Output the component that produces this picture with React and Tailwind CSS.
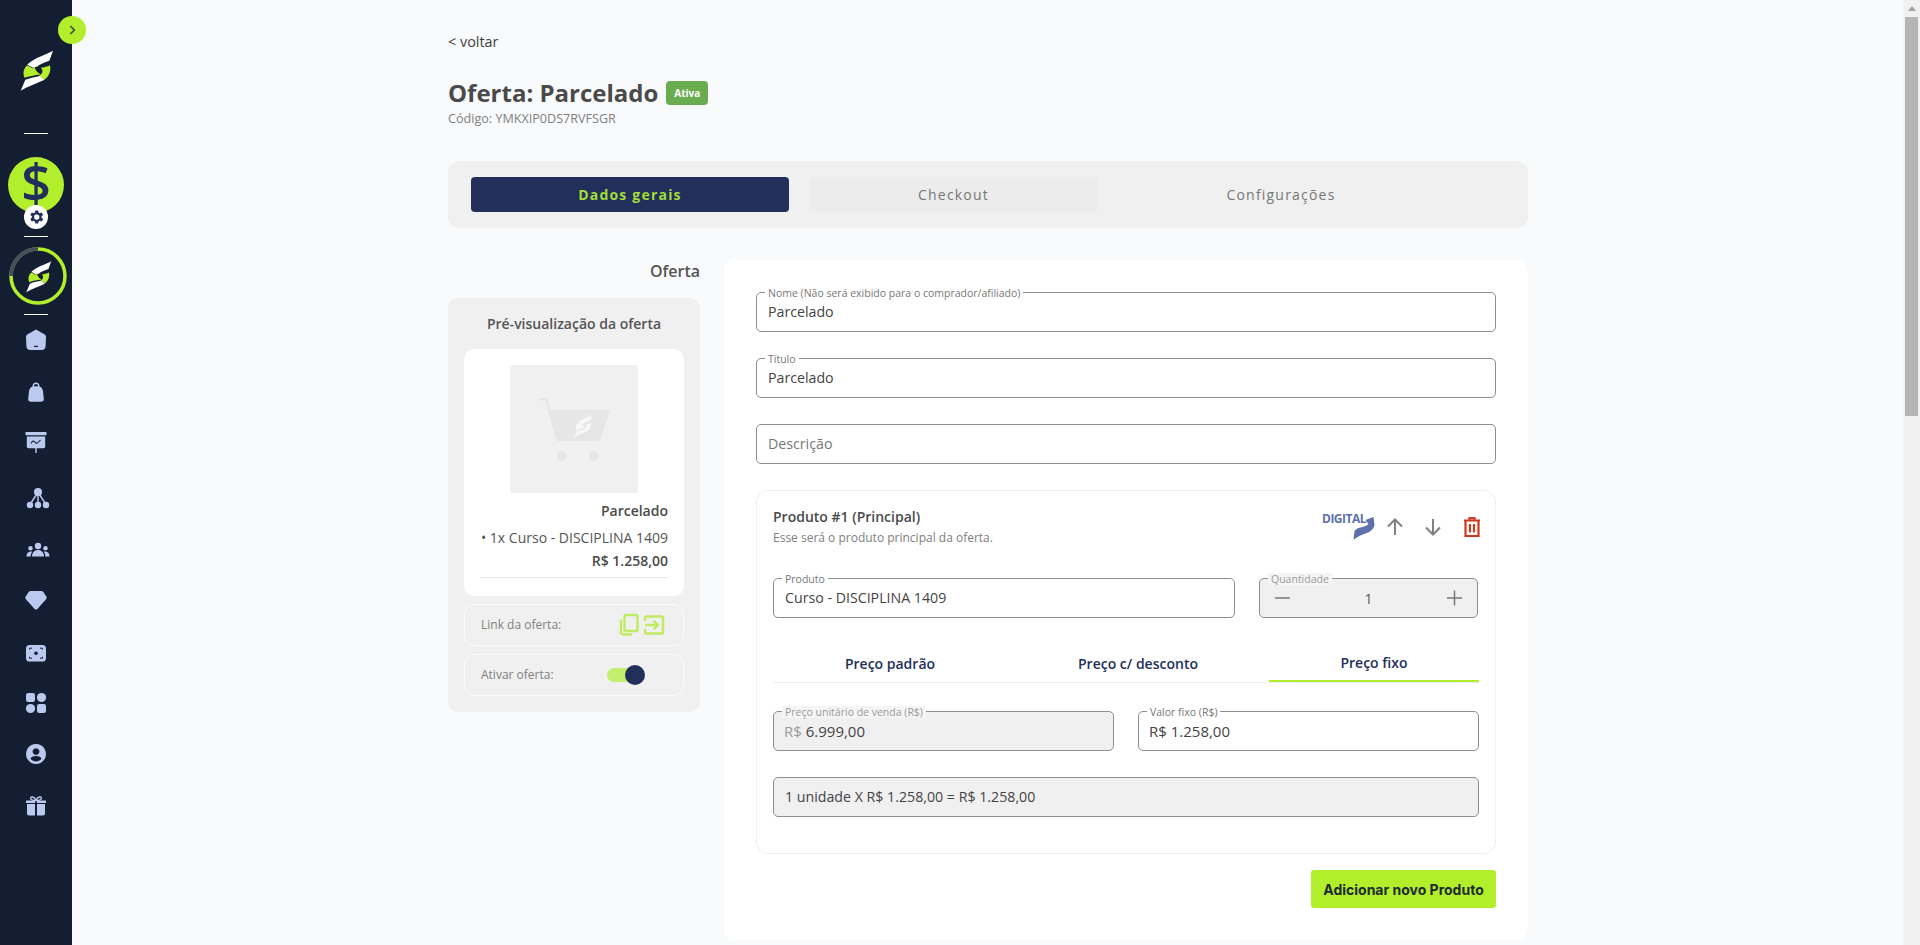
import React from "react";

const logoWhite = [
  "M127 33 L116 63 C98 70 86 74 80 80 L66 84 L50 74 C70 55 105 45 127 33Z",
  "M102 120 C76 132 50 140 30 153 L44 120 C60 114 75 112 88 108Z",
];
const logoLime = [
  "M50 76 L66 86 L72 80 C72 90 80 98 90 104 C72 106 54 110 42 114 C36 100 38 86 50 76Z",
  "M118 76 C122 94 114 110 102 119 L86 108 C96 101 99 92 90 84 C100 82 110 80 118 76Z",
];

const Logo = ({ className }) => (
  <svg viewBox="25 28 105 128" className={className}>
    {logoWhite.map((d) => <path key={d} d={d} fill="#ffffff" />)}
    {logoLime.map((d) => <path key={d} d={d} fill="#b2ee2c" />)}
  </svg>
);

const I = ({ children, className = "" }) => (
  <svg viewBox="0 0 24 24" className={`w-6 h-6 ${className}`} fill="#bcc9ef">{children}</svg>
);

const icons = [
  <I key="a"><path d="M12 1.500 L20.300 6.300 C21.500 7 22 8 22 9.300 L21.600 18 C21.500 20.500 20 22 17.800 22 L6.200 22 C4 22 2.500 20.500 2.400 18 L2 9.300 C2 8 2.500 7 3.700 6.300Z" /><rect x="10" y="17.800" width="4" height="1.200" fill="#131e32" /></I>,
  <I key="b"><path fillRule="evenodd" d="M12 2.500 C9.900 2.500 8.600 4 8.300 6.600 C6.400 7.300 5.300 9 5 11.500 L4.200 18.500 C4 20.600 5 21.700 7 21.700 L17 21.700 C19 21.700 20 20.600 19.800 18.500 L19 11.500 C18.700 9 17.600 7.300 15.700 6.600 C15.400 4 14.100 2.500 12 2.500Z M12 3.900 C13.300 3.900 14.100 4.900 14.300 6.300 L9.700 6.300 C9.900 4.900 10.700 3.900 12 3.900Z" /></I>,
  <I key="c"><rect x="1.500" y="2" width="21" height="3.200" rx="0.600" /><path d="M2.800 6.500 H21.200 V16.500 C21.200 17.500 20.500 18.200 19.500 18.200 H12.700 V23 H11.300 V18.200 H4.500 C3.500 18.200 2.800 17.500 2.800 16.500Z" /><path d="M7 13.500 C8.500 10.500 10 10.500 11 12.300 C12 14 13.500 13.500 16.500 10" stroke="#131e32" strokeWidth="1.100" fill="none" /></I>,
  <I key="d"><circle cx="12" cy="6" r="4" /><circle cx="4" cy="19" r="3.200" /><circle cx="12" cy="19" r="3.200" /><circle cx="20" cy="19" r="3.200" /><path d="M10.800 8 L5 17 M13.200 8 L19 17 M12 8 V17" stroke="#bcc9ef" strokeWidth="1.400" /></I>,
  <I key="e"><circle cx="12" cy="7" r="3.200" /><circle cx="4.500" cy="9.200" r="2.200" /><circle cx="19.500" cy="9.200" r="2.200" /><path d="M6 17.500 C6 13.500 8.500 11 12 11 C15.500 11 18 13.500 18 17.500Z" /><path d="M0.500 17.500 C0.500 14.500 1.800 12.400 4.600 12.400 C5.200 12.400 5.800 12.500 6.200 12.800 C5.200 14 4.700 15.600 4.700 17.500Z" /><path d="M23.500 17.500 C23.500 14.500 22.200 12.400 19.400 12.400 C18.800 12.400 18.200 12.500 17.800 12.800 C18.800 14 19.300 15.600 19.300 17.500Z" /></I>,
  <I key="f"><path d="M7 3 H17 C18.200 3 19 3.500 19.700 4.500 L22.300 8.600 C22.900 9.500 22.800 10.500 22.100 11.300 L13.400 20.900 C12.600 21.800 11.400 21.800 10.600 20.900 L1.900 11.300 C1.200 10.500 1.100 9.500 1.700 8.600 L4.300 4.500 C5 3.500 5.800 3 7 3Z" /></I>,
  <I key="g"><rect x="2" y="4" width="20" height="16.500" rx="3.600" /><circle cx="12" cy="12.200" r="1.800" fill="#131e32" /><path d="M5.500 7.200 H8 M16 7.200 H18.500 M5.500 7.200 V8.600 M18.500 7.200 V8.600 M5.500 17.200 H8 M16 17.200 H18.500 M5.500 17.200 V15.800 M18.500 17.200 V15.800" stroke="#131e32" strokeWidth="1" fill="none" /></I>,
  <I key="h"><rect x="2" y="2" width="9" height="9" rx="2.200" /><circle cx="17.500" cy="6.500" r="4.600" /><circle cx="6.500" cy="17.500" r="4.600" /><rect x="13" y="13" width="9" height="9" rx="2.200" /></I>,
  <I key="i"><path fillRule="evenodd" d="M12 2 a10 10 0 1 1 -0.010 0Z M12 6.200 a3.400 3.400 0 1 0 0.010 0Z M12 14 C9 14 6.600 15.300 6.600 17 C8 18.500 9.900 19.400 12 19.400 C14.100 19.400 16 18.500 17.400 17 C17.400 15.300 15 14 12 14Z" /></I>,
  <I key="j"><path d="M3 10 H11 V21.500 H5 C3.800 21.500 3 20.700 3 19.500Z M13 10 H21 V19.500 C21 20.700 20.200 21.500 19 21.500 H13Z" /><path d="M2 6.600 H11 V9 H2Z M13 6.600 H22 V9 H13Z" /><path d="M12 6.400 C10.500 2.500 6.500 2 6.600 4.500 C6.700 6 9 6.400 12 6.400 C15 6.400 17.300 6 17.400 4.500 C17.500 2 13.500 2.500 12 6.400Z" stroke="#bcc9ef" strokeWidth="1.400" fill="none" /></I>,
];

const iconTops = ["mt-[13px]", "mt-[28px]", "mt-[26px]", "mt-[32px]", "mt-[29px]", "mt-[25px]", "mt-[29px]", "mt-[26px]", "mt-[27px]", "mt-[28px]"];

function Sidebar() {
  return (
    <aside className="relative flex h-full w-[72px] shrink-0 flex-col items-center bg-[#131e32]">
      <button className="absolute left-[58px] top-4 flex h-7 w-7 items-center justify-center rounded-full bg-[#b2ee2c]">
        <svg viewBox="0 0 24 24" className="h-4 w-4" fill="none" stroke="#3a4a3a" strokeWidth="2.400"><path d="M9.500 6l6 6-6 6" /></svg>
      </button>
      <Logo className="mt-[49px] h-[43px] w-[35px]" />
      <div className="mt-[41px] h-px w-6 bg-white" />
      <div className="relative mt-[23px] flex h-14 w-14 items-center justify-center rounded-full bg-[#b2ee2c]">
        <span className="-mt-[7px] text-[52px] font-semibold leading-none text-[#222f5b] [font-family:'Open_Sans',sans-serif]">$</span>
        <div className="absolute left-[16px] top-[48px] flex h-6 w-6 items-center justify-center rounded-full bg-white">
          <svg viewBox="0 0 24 24" className="h-[18px] w-[18px]" fill="#222f5b"><path fillRule="evenodd" d="M19.400 13a7.500 7.500 0 000-2l2.100-1.600-2-3.500-2.500 1a7.500 7.500 0 00-1.700-1L15 3.200h-4l-.4 2.700a7.500 7.500 0 00-1.700 1l-2.500-1-2 3.500L6.500 11a7.500 7.500 0 000 2l-2.100 1.600 2 3.500 2.500-1a7.500 7.500 0 001.700 1l.4 2.700h4l.4-2.700a7.500 7.500 0 001.700-1l2.500 1 2-3.500zM13 15.500a3.500 3.500 0 11.010-7 3.500 3.500 0 01-.010 7z" /></svg>
        </div>
      </div>
      <div className="mt-[23px] h-px w-6 bg-white" />
      <div className="relative ml-1 mt-[10px] h-[58px] w-[58px]">
        <svg viewBox="0 0 58 58" className="h-full w-full" fill="none">
          <circle cx="29" cy="29" r="27" stroke="#b2ee2c" strokeWidth="3.500" />
          <path d="M2 29 A27 27 0 0 1 29 2" stroke="#454c5c" strokeWidth="3.500" />
        </svg>
        <div className="absolute inset-0 flex items-center justify-center">
          <Logo className="h-[33px] w-[27px]" />
        </div>
      </div>
      <div className="mt-[9px] h-px w-6 bg-white" />
      {icons.map((ic, i) => (
        <div key={i} className={`${iconTops[i]} ${i === 3 || i === 4 ? "ml-[4px]" : ""}`}>{ic}</div>
      ))}
    </aside>
  );
}

function Field({ label, value, disabled, className = "", valueClass = "font-medium text-[#444444]", children }) {
  return (
    <div className={`relative flex h-[40px] items-center rounded-[5px] border border-[#8e8e8e] px-[11px] ${disabled ? "bg-[#f0f0f0]" : "bg-white"} ${className}`}>
      {label && (
        <span className={`absolute left-[8px] top-[-6px] px-[3px] text-[10.5px] leading-[12px] ${disabled ? "bg-[#f5f5f5] text-[#9a9a9a]" : "bg-white text-[#777777]"}`}>{label}</span>
      )}
      {children || <span className={`text-[14.2px] ${valueClass}`}>{value}</span>}
    </div>
  );
}

function Tabs() {
  return (
    <div className="mt-[34px] flex h-[67px] items-center rounded-[12px] bg-[#f0f0f0] pl-[23px] tracking-[1.2px]">
      <button className="h-[35px] w-[318px] rounded-[4px] bg-[#222f5b] text-[14px] font-bold text-[#a2dd3a]">Dados gerais</button>
      <button className="ml-5 h-[35px] w-[289px] rounded-[4px] bg-[#ececec] text-[14px] text-[#777777]">Checkout</button>
      <button className="ml-[38px] w-[290px] text-center text-[14px] text-[#777777]">Configurações</button>
    </div>
  );
}

function Preview() {
  return (
    <div className="w-[252px] shrink-0">
      <h2 className="h-[23px] text-right text-[16px] font-semibold leading-[23px] text-[#555555]">Oferta</h2>
      <div className="mt-[15px] h-[414px] rounded-[10px] bg-[#f0f0f0] px-4 pt-4">
        <p className="h-[20px] text-center text-[14px] font-semibold leading-[20px] text-[#555555]">Pré-visualização da oferta</p>
        <div className="mt-[15px] h-[247px] rounded-[10px] bg-white px-4 pt-4 text-right text-[#4a4a4a]">
          <div className="mx-auto flex h-[128px] w-[128px] items-center justify-center rounded-[3px] bg-[#f0f0f0]">
            <svg viewBox="0 0 72 64" className="ml-[1px] mt-[2px] h-[64px] w-[72px]">
              <path d="M0 0 H5 C7.500 0 8.500 1 9.200 4 L11 12 H68 C70 12 70.500 13.500 70 15 L62 40 C61.500 42 60 43 58 43 H20 C18 43 17 42 16.500 40 L7 4 C6.700 2.500 6 2.500 5 2.500 H0Z" fill="#e6e6e6" />
              <circle cx="23" cy="58" r="5" fill="#e6e6e6" />
              <circle cx="55" cy="58" r="5" fill="#e6e6e6" />
              <g transform="translate(29.400 10.500) scale(0.190)" fill="#f7f7f7">
                {[...logoWhite, ...logoLime].map((d) => <path key={d} d={d} />)}
              </g>
            </svg>
          </div>
          <p className="mt-[8px] h-[20px] text-[14px] font-semibold leading-[20px]">Parcelado</p>
          <p className="mt-[7px] h-[20px] text-[14px] leading-[20px] text-[#555555]">• 1x Curso - DISCIPLINA 1409</p>
          <p className="mt-[3px] h-[20px] text-[14px] font-semibold leading-[20px]">R$ 1.258,00</p>
          <div className="mt-[6px] h-[1px] bg-[#e6e6e6]" />
        </div>
        <div className="mt-2 flex h-[42px] items-center justify-between rounded-[10px] border border-[#fafafa] pl-4 pr-[17px] text-[12px] text-[#808080]">
          <span>Link da oferta:</span>
          <span className="flex items-center gap-[1px]">
            <svg viewBox="0 0 24 24" className="h-[24px] w-[24px]" fill="none" stroke="#c0ea5f" strokeWidth="2.400"><path d="M4 6.500V19a2.500 2.500 0 002.500 2.500H15" /><rect x="7.500" y="2" width="13" height="16" rx="1.500" /></svg>
            <svg viewBox="0 0 24 24" className="h-[24px] w-[24px]" fill="none" stroke="#c0ea5f" strokeWidth="2.400"><path d="M3 8V5a1.500 1.500 0 011.500-1.500h15A1.500 1.500 0 0121 5v14a1.500 1.500 0 01-1.500 1.500h-15A1.500 1.500 0 013 19v-3" /><path d="M3 12h12M11.500 7.500l4.500 4.500-4.500 4.500" /></svg>
          </span>
        </div>
        <div className="mt-2 flex h-[42px] items-center justify-between rounded-[10px] border border-[#fafafa] pl-4 pr-[38px] text-[12px] text-[#808080]">
          <span>Ativar oferta:</span>
          <span className="relative flex h-[20px] w-[38px] items-center">
            <span className="h-[14px] w-[32px] rounded-full bg-[#c4ee6e]" />
            <span className="absolute right-0 top-0 h-5 w-5 rounded-full bg-[#222f5b]" />
          </span>
        </div>
      </div>
    </div>
  );
}

function ProductCard() {
  return (
    <div className="mt-[26px] h-[364px] rounded-[12px] border border-[#f0f0f0] px-4 pt-[16px]">
      <div className="flex h-[39px] items-start justify-between">
        <div>
          <p className="text-[14px] font-semibold leading-[20px] text-[#4a4a4a]">Produto #1 (Principal)</p>
          <p className="mt-[3px] text-[12px] leading-[16px] text-[#808080]">Esse será o produto principal da oferta.</p>
        </div>
        <div className="-mr-[5px] flex items-start">
          <div className="relative mt-[5px] h-[24px] w-[51px]">
            <span className="-ml-[2px] block text-[12px] font-bold leading-[14px] tracking-[-0.5px] text-[#5f70ad]">DIGITAL</span>
            <svg viewBox="0 0 50 24" className="absolute left-0 top-[4px] h-[24px] w-[51px]"><path d="M49 1 L50 9 C48 17 40 17 35 20 C33 21 31 22 29 24 L30 15 C34 10 40 12 44 8 L41 4Z" fill="#5f70ad" /></svg>
          </div>
          <svg viewBox="0 0 24 24" className="ml-[8px] mt-[8px] h-6 w-6" fill="none" stroke="#808080" strokeWidth="2"><path d="M12 20V4.500M5 11.500l7-7 7 7" /></svg>
          <svg viewBox="0 0 24 24" className="ml-[14px] mt-[8px] h-6 w-6" fill="none" stroke="#808080" strokeWidth="2"><path d="M12 4v15.500M5 12.500l7 7 7-7" /></svg>
          <svg viewBox="0 0 24 24" className="ml-[15px] mt-[8px] h-6 w-6" fill="none" stroke="#cf3a1e" strokeWidth="2.200"><path d="M4 5.500h16M9.500 5V3h5v2M5.500 5.500V21h13V5.500M10 9v8.500M14 9v8.500" /></svg>
        </div>
      </div>
      <div className="mt-[32px] flex gap-[24px]">
        <Field label="Produto" value="Curso - DISCIPLINA 1409" className="w-[462px]" />
        <Field label="Quantidade" disabled className="w-[219px] justify-between !px-[13px]">
          <svg viewBox="0 0 20 20" className="h-5 w-5" stroke="#777777" strokeWidth="1.500"><path d="M2 10h15" /></svg>
          <span className="text-[14px] text-[#555555]">1</span>
          <svg viewBox="0 0 20 20" className="h-5 w-5" stroke="#777777" strokeWidth="1.500"><path d="M3 10h15M10.500 2.500v15" /></svg>
        </Field>
      </div>
      <div className="mt-[27px] flex h-[38px] border-b border-[#eeeeee] text-[14px] font-semibold text-[#222f5b]">
        <div className="flex w-[234px] items-center justify-center">Preço padrão</div>
        <div className="flex w-[262px] items-center justify-center">Preço c/ desconto</div>
        <div className="flex w-[210px] items-center justify-center border-b-2 border-[#b2ee2c]">Preço fixo</div>
      </div>
      <div className="mt-[28px] flex gap-[24px]">
        <Field label="Preço unitário de venda (R$)" disabled className="w-[341px] !px-[10px]">
          <span className="text-[15px] font-medium text-[#444444]"><span className="font-normal text-[#9a9a9a]">R$ </span>6.999,00</span>
        </Field>
        <Field label="Valor fixo (R$)" className="w-[341px] !px-[10px]">
          <span className="text-[15px] font-medium text-[#444444]">R$ 1.258,00</span>
        </Field>
      </div>
      <Field disabled value="1 unidade X R$ 1.258,00 = R$ 1.258,00" className="mt-[26px] w-[706px]" />
    </div>
  );
}

function Scrollbar() {
  return (
    <div className="flex h-full w-[17px] shrink-0 flex-col items-center bg-[#f1f1f1]">
      <div className="flex h-[17px] items-center justify-center">
        <div className="h-0 w-0 border-x-[4px] border-b-[5px] border-x-transparent border-b-[#a3a3a3]" />
      </div>
      <div className="h-[399px] w-[13px] bg-[#b5b5b5]" />
    </div>
  );
}

export default function App() {
  return (
    <div className="flex h-screen w-full overflow-hidden bg-[#f9fafc] [font-family:'Open_Sans',sans-serif]">
      <Sidebar />
      <main className="min-w-0 flex-1 pl-[376px] pt-[32px]">
        <div className="w-[1080px]">
          <a className="block text-[14.4px] font-medium leading-[20px] text-[#404040]">&lt; voltar</a>
          <div className="mt-[25px] flex h-8 items-center">
            <h1 className="text-[24px] font-bold leading-[32px] text-[#4a4a4a]">Oferta: Parcelado</h1>
            <span className="ml-2 flex h-6 w-[42px] items-center justify-center rounded-[4px] bg-[#6aad50] text-[10px] font-bold text-white">Ativa</span>
          </div>
          <p className="mt-[2px] text-[12.6px] leading-[16px] text-[#808080]">Código: YMKXIP0DS7RVFSGR</p>
          <Tabs />
          <div className="mt-[32px] flex gap-6">
            <Preview />
            <section className="h-[680px] w-[804px] rounded-[12px] bg-white px-8 pt-[32px]">
              <Field label="Nome (Não será exibido para o comprador/afiliado)" value="Parcelado" />
              <Field label="Título" value="Parcelado" className="mt-[26px]" />
              <Field className="mt-[26px]" value="Descrição" valueClass="text-[#777777]" />
              <ProductCard />
              <div className="mt-[16px] flex justify-end">
                <button className="h-[38px] w-[185px] rounded-[3px] bg-[#b2ee2c] text-[14px] font-bold text-[#1d2b2b] [font-family:Inter,sans-serif]">Adicionar novo Produto</button>
              </div>
            </section>
          </div>
        </div>
      </main>
      <Scrollbar />
    </div>
  );
}
